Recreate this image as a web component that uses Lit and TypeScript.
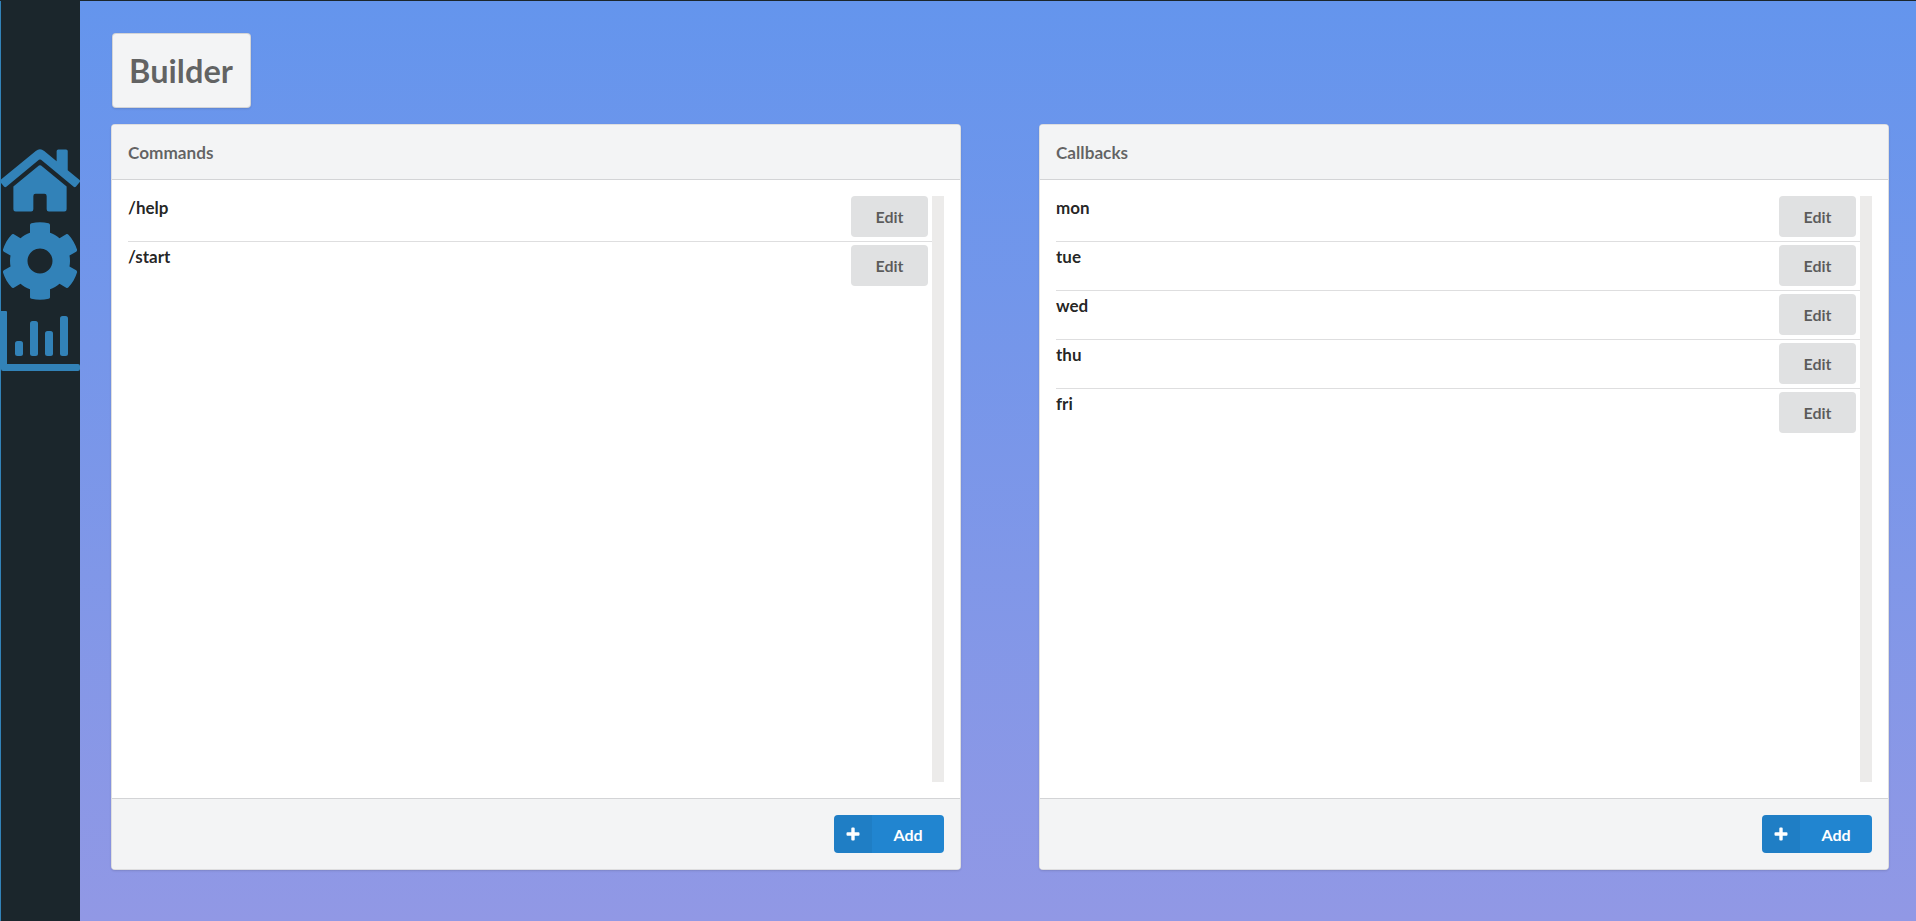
import { LitElement, html, css, svg } from "lit";
import { customElement } from "lit/decorators.js";

const home = svg`<path d="M280.37 148.26L96 300.11V464a16 16 0 0 0 16 16l112.06-.29a16 16 0 0 0 15.92-16V368a16 16 0 0 1 16-16h64a16 16 0 0 1 16 16v95.64a16 16 0 0 0 16 16.05L464 480a16 16 0 0 0 16-16V300L295.67 148.26a12.19 12.19 0 0 0-15.3 0zM571.6 251.47L488 182.56V44.05a12 12 0 0 0-12-12h-56a12 12 0 0 0-12 12v72.61L318.47 43a48 48 0 0 0-61 0L4.34 251.47a12 12 0 0 0-1.6 16.9l25.5 31A12 12 0 0 0 45.15 301l235.22-193.74a12.19 12.19 0 0 1 15.3 0L530.9 301a12 12 0 0 0 16.9-1.6l25.5-31a12 12 0 0 0-1.7-16.93z"/>`;
const cog = svg`<path d="M487.4 315.7l-42.6-24.6c4.3-23.2 4.3-47 0-70.2l42.6-24.6c4.9-2.8 7.1-8.6 5.5-14-11.1-35.6-30-67.8-54.7-94.6-3.8-4.1-10-5.1-14.8-2.3L380.8 110c-17.9-15.4-38.5-27.3-60.8-35.1V25.8c0-5.6-3.9-10.5-9.4-11.7-36.7-8.2-74.3-7.8-109.2 0-5.5 1.2-9.4 6.1-9.4 11.7V75c-22.2 7.9-42.8 19.8-60.8 35.1L88.7 85.5c-4.9-2.8-11-1.9-14.8 2.3-24.7 26.7-43.6 58.9-54.7 94.6-1.7 5.4.6 11.2 5.5 14L67.3 221c-4.3 23.2-4.3 47 0 70.2l-42.6 24.6c-4.9 2.8-7.1 8.6-5.5 14 11.1 35.6 30 67.8 54.7 94.6 3.8 4.1 10 5.1 14.8 2.3l42.6-24.6c17.9 15.4 38.5 27.3 60.8 35.1v49.2c0 5.6 3.9 10.5 9.4 11.7 36.7 8.2 74.3 7.8 109.2 0 5.5-1.2 9.4-6.1 9.4-11.7v-49.2c22.2-7.9 42.8-19.8 60.8-35.1l42.6 24.6c4.9 2.8 11 1.9 14.8-2.3 24.7-26.7 43.6-58.9 54.7-94.6 1.5-5.5-.7-11.3-5.6-14.1zM256 336c-44.1 0-80-35.9-80-80s35.9-80 80-80 80 35.9 80 80-35.9 80-80 80z"/>`;
const chart = svg`<path d="M1 0h5a1 1 0 0 1 1 1v52h71a2 2 0 0 1 2 2v3a2 2 0 0 1-2 2H3a2 2 0 0 1-2-2z"/>
<rect x="15" y="30" width="8" height="15" rx="2.5"/><rect x="30" y="10" width="8" height="35" rx="2.5"/><rect x="45" y="20" width="8" height="25" rx="2.5"/><rect x="60" y="5" width="8" height="40" rx="2.5"/>`;

const panels = [
  { title: "Commands", items: ["/help", "/start"] },
  { title: "Callbacks", items: ["mon", "tue", "wed", "thu", "fri"] },
];

@customElement("app-root")
export class AppRoot extends LitElement {
  static styles = css`
    :host { display: block; }
    * { box-sizing: border-box; }
    .page {
      height: 921px; display: flex; overflow: hidden;
      border-top: 1px solid #1b262c;
      font-family: Lato, sans-serif;
      background: linear-gradient(#6495ed, #9198e5);
    }
    .side {
      width: 80px; flex: none; background: #1b262c; border-left: 1px solid #3282b8;
      display: flex; flex-direction: column; padding-top: 144px; fill: #3282b8;
    }
    .side svg { display: block; width: 80px; flex: none; margin-left: -1px; }
    .i-home { height: 71px; }
    .i-cog { height: 80px; margin-top: 5px; }
    .i-chart { height: 61px; margin-top: 10px; }
    .main { flex: 1; padding: 32px 27px 0 31px; display: flex; flex-direction: column; }
    .title {
      align-self: flex-start; margin-left: 1px; height: 75px; width: 139px; padding: 0 0 1px 16px; display: flex; align-items: center;
      background: #f3f4f5; border: 1px solid rgba(34,36,38,.15); border-radius: 4px;
      box-shadow: 0 1px 2px rgba(34,36,38,.15);
      color: rgba(0,0,0,.6); font-size: 32.6px; font-weight: 700;
    }
    .cols { margin-top: 16px; display: grid; grid-template-columns: 850px 850px; column-gap: 78px; }
    .panel {
      height: 746px; display: flex; flex-direction: column; background: #fff;
      border: 1px solid rgba(34,36,38,.15); border-radius: 4px;
      box-shadow: 0 1px 2px rgba(34,36,38,.15); overflow: hidden;
    }
    .head {
      height: 55px; flex: none; padding: 0 16px; display: flex; align-items: center;
      background: #f3f4f5; border-bottom: 1px solid rgba(34,36,38,.15);
      color: rgba(0,0,0,.6); font-size: 17.2px; font-weight: 700;
    }
    .body { flex: 1; padding: 16px; display: flex; min-height: 0; }
    .list { flex: 1; }
    .track { width: 12px; height: 586px; background: #ecebea; flex: none; }
    .row {
      height: 49px; display: flex; justify-content: space-between; align-items: flex-start;
      border-top: 1px solid rgba(34,36,38,.15); padding-top: 3px;
      color: rgba(0,0,0,.87); font-size: 17px; font-weight: 700;
    }
    .row:first-child { border-top: 0; height: 45px; padding-top: 0; }
    .row > span { line-height: 20px; margin-top: 2px; }
    .edit {
      width: 77px; height: 41px; margin-right: 4px; border: 0; border-radius: 4px; background: #e0e1e2;
      color: rgba(0,0,0,.6); font: 700 16px Lato, sans-serif; padding: 0;
    }
    .foot {
      height: 71px; flex: none; padding: 16px; display: flex; justify-content: flex-end; align-items: flex-start;
      background: #f3f4f5; border-top: 1px solid rgba(34,36,38,.15);
    }
    .add {
      width: 110px; height: 38px; display: flex; align-items: center; border: 0; padding: 0; border-radius: 4px;
      background: #2185d0; color: #fff; font: 700 16px Lato, sans-serif; overflow: hidden;
    }
    .plus { width: 38px; height: 38px; background: rgba(0,0,0,.05); display: flex; align-items: center; justify-content: center; flex: none; }
    .plus svg { width: 14px; height: 14px; fill: #fff; display: block; }
    .add span { flex: 1; text-align: center; }
  `;

  render() {
    return html`<div class="page">
      <nav class="side">
        <svg class="i-home" viewBox="0 0 576 512">${home}</svg>
        <svg class="i-cog" viewBox="0 0 512 512">${cog}</svg>
        <svg class="i-chart" viewBox="0 0 80 61">${chart}</svg>
      </nav>
      <main class="main">
        <div class="title">Builder</div>
        <div class="cols">
          ${panels.map(p => html`<section class="panel">
            <div class="head">${p.title}</div>
            <div class="body">
              <div class="list">
                ${p.items.map(t => html`<div class="row"><span>${t}</span><button class="edit">Edit</button></div>`)}
              </div>
              <div class="track"></div>
            </div>
            <div class="foot">
              <button class="add"><div class="plus"><svg viewBox="0 0 14 14"><path d="M5.3 1.5a1 1 0 0 1 1-1h1.4a1 1 0 0 1 1 1v3.8h3.8a1 1 0 0 1 1 1v1.4a1 1 0 0 1-1 1H8.700v3.800a1 1 0 0 1-1 1H6.300a1 1 0 0 1-1-1V8.700H1.500a1 1 0 0 1-1-1V6.300a1 1 0 0 1 1-1h3.800z"/></svg></div><span>Add</span></button>
            </div>
          </section>`)}
        </div>
      </main>
    </div>`;
  }
}
